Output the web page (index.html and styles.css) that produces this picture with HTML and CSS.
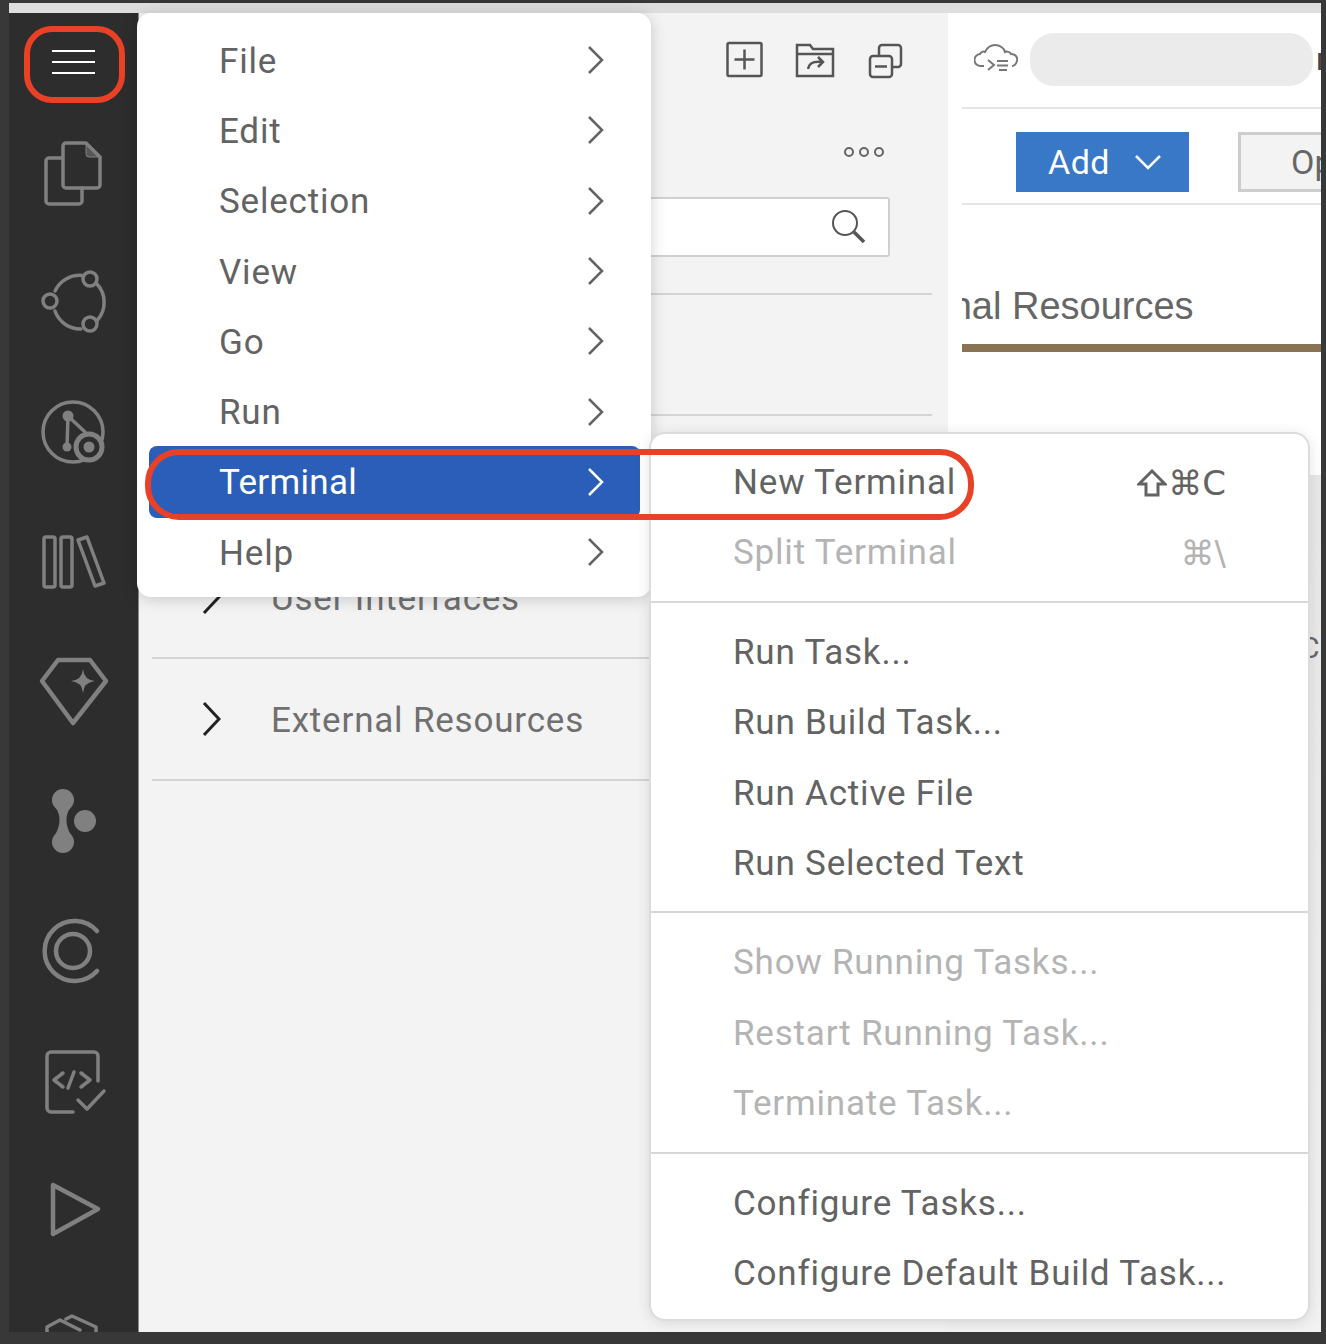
FILE: index.html
```html
<!DOCTYPE html>
<html lang="en">
<head>
    <meta charset="UTF-8">
    <title>Terminal menu</title>
    <link rel="stylesheet" href="styles.css">
</head>
<body>
    <div class="window">
        <div class="topbar"></div>
        <div class="main">
            <nav class="activity">
                <div class="hamburger"><span></span><span></span><span></span></div>
                <svg class="act-icon" viewBox="0 0 72 72">
                    <path d="M25 21H12a3 3 0 0 0-3 3v40a3 3 0 0 0 3 3h30a3 3 0 0 0 3-3V51"/>
                    <path d="M29 6h20l14 14v28a3 3 0 0 1-3 3H29a3 3 0 0 1-3-3V9a3 3 0 0 1 3-3z"/>
                    <path class="fill" d="M49 6v11a3 3 0 0 0 3 3h11z"/>
                </svg>
                <svg class="act-icon" viewBox="0 0 72 72">
                    <circle cx="53" cy="13" r="7"/>
                    <circle cx="13" cy="35" r="7"/>
                    <circle cx="53" cy="58" r="7"/>
                    <path d="M18 25A27 27 0 0 1 45 9.500"/>
                    <path d="M60 18A27 27 0 0 1 60.500 54"/>
                    <path d="M44 63A27 27 0 0 1 18 45"/>
                </svg>
                <svg class="act-icon" viewBox="0 0 72 72">
                    <circle cx="36" cy="36" r="30"/>
                    <circle class="solid" cx="31" cy="20" r="5.500"/>
                    <circle class="solid" cx="30" cy="51" r="4.500"/>
                    <path d="M31 20L30 51M31 20L48 36"/>
                    <circle class="ring" cx="52" cy="51" r="13"/>
                    <circle class="solid" cx="52" cy="51" r="5.500"/>
                </svg>
                <svg class="act-icon" viewBox="0 0 72 72">
                    <rect x="7" y="11" width="11" height="50" rx="2"/>
                    <rect x="24" y="11" width="11" height="50" rx="2"/>
                    <path d="M41 14l9-3 17 46-9 3z"/>
                </svg>
                <svg class="act-icon" viewBox="0 0 72 72">
                    <path class="thick" d="M21 5h32l16 21-33 42L5 26z"/>
                    <path class="fill-only" d="M46 14Q47 25 58 26 47 27 46 38 45 27 34 26 45 25 46 14z"/>
                </svg>
                <svg class="act-icon" viewBox="0 0 72 72">
                    <circle class="solid" cx="26" cy="15" r="11"/>
                    <circle class="solid" cx="26" cy="57" r="11"/>
                    <circle class="solid" cx="48" cy="36" r="11"/>
                    <path class="fill-only" d="M18 22C25 30 23 42 18 50H34C29 42 27 30 34 22z"/>
                </svg>
                <svg class="act-icon" viewBox="0 0 72 72">
                    <path class="thick" d="M60 16A30 30 0 1 0 60 56"/>
                    <circle class="thick" cx="36" cy="36" r="17"/>
                </svg>
                <svg class="act-icon" viewBox="0 0 72 72">
                    <path d="M61 36V11a4 4 0 0 0-4-4H14a4 4 0 0 0-4 4v52a4 4 0 0 0 4 4h22"/>
                    <path d="M26 28l-9 7 9 7M44 28l9 7-9 7M37 27l-6 16M41 55l9 9 17-18"/>
                </svg>
                <svg class="act-icon" viewBox="0 0 72 72">
                    <path class="thick" d="M16 11l45 24-45 25z"/>
                </svg>
                <svg class="act-icon" viewBox="0 0 72 72">
                    <path d="M10 33V23l13-7 20 10M29 15l6-3 24 11v10"/>
                </svg>
            </nav>

            <aside class="sidebar">
                <div class="side-tools">
                    <svg class="tool-icon" viewBox="0 0 40 40">
                        <rect x="2.500" y="3" width="34" height="33" rx="1.500"/>
                        <path d="M19.500 9.500v20M9.500 19.500h20"/>
                    </svg>
                    <svg class="tool-icon" viewBox="0 0 40 40">
                        <path d="M2 36V5h13l3 4h20v27zM2 14h36"/>
                        <path d="M13 29c1-6 5-8 14-7M23 17l5 5-5 5"/>
                    </svg>
                    <svg class="tool-icon" viewBox="0 0 40 40">
                        <rect x="5" y="16" width="22" height="21" rx="3"/>
                        <path d="M14 16v-8a3 3 0 0 1 3-3h16a3 3 0 0 1 3 3v16a3 3 0 0 1-3 3h-6M10 26.500h12"/>
                    </svg>
                </div>
                <div class="side-more">
                    <span class="dot"></span><span class="dot"></span><span class="dot"></span>
                </div>
                <div class="search-box">
                    <svg class="search-icon" viewBox="0 0 36 36">
                        <circle cx="15" cy="15" r="12"/>
                        <path class="handle" d="M24 24l10 10"/>
                    </svg>
                </div>
                <div class="side-row first"></div>
                <div class="side-row"></div>
                <div class="side-row">
                    <svg class="chevron" viewBox="0 0 20 36"><path d="M3 2l15 16L3 34"/></svg>
                    <span>User Interfaces</span>
                </div>
                <div class="side-row">
                    <svg class="chevron" viewBox="0 0 20 36"><path d="M3 2l15 16L3 34"/></svg>
                    <span>External Resources</span>
                </div>
            </aside>

            <section class="editor">
                <div class="ed-head">
                    <svg class="cloud" viewBox="0 0 44 30">
                        <path d="M10 22H7a6 6 0 0 1-1-12c1-2 3-3 5-2 2-4 5-7 10-7 5 0 9 3 10 7 2-1 5 0 6 2 5 0 7 4 6 7-1 3-3 5-5 5"/>
                        <path d="M14 16l6 5-6 5M23 17h11M23 21.500h11M25 26h8"/>
                    </svg>
                    <div class="pill"></div>
                    <span class="head-name">n</span>
                </div>
                <div class="ed-actions">
                    <button class="btn-add">Add
                        <svg viewBox="0 0 28 16"><path d="M2 2l12 12L26 2"/></svg>
                    </button>
                    <button class="btn-open">Open</button>
                </div>
                <div class="ed-title"><span>External Resources</span></div>
                <div class="ed-rule"></div>
                <div class="ed-card"><span>C</span></div>
            </section>
        </div>
    </div>

    <div class="menu main-menu">
        <div class="menu-item">File<svg class="arrow" viewBox="0 0 20 32"><path d="M3 3l13 13L3 29"/></svg></div>
        <div class="menu-item">Edit<svg class="arrow" viewBox="0 0 20 32"><path d="M3 3l13 13L3 29"/></svg></div>
        <div class="menu-item">Selection<svg class="arrow" viewBox="0 0 20 32"><path d="M3 3l13 13L3 29"/></svg></div>
        <div class="menu-item">View<svg class="arrow" viewBox="0 0 20 32"><path d="M3 3l13 13L3 29"/></svg></div>
        <div class="menu-item">Go<svg class="arrow" viewBox="0 0 20 32"><path d="M3 3l13 13L3 29"/></svg></div>
        <div class="menu-item">Run<svg class="arrow" viewBox="0 0 20 32"><path d="M3 3l13 13L3 29"/></svg></div>
        <div class="menu-item active">Terminal<svg class="arrow" viewBox="0 0 20 32"><path d="M3 3l13 13L3 29"/></svg></div>
        <div class="menu-item">Help<svg class="arrow" viewBox="0 0 20 32"><path d="M3 3l13 13L3 29"/></svg></div>
    </div>

    <div class="menu sub-menu">
        <div class="menu-item">New Terminal
            <span class="keys">
                <svg class="shift" viewBox="0 0 30 28"><path d="M15 2L2 15h7v11h12V15h7z"/></svg>⌘C
            </span>
        </div>
        <div class="menu-item off">Split Terminal<span class="keys">⌘\</span></div>
        <div class="sep"></div>
        <div class="menu-item">Run Task...</div>
        <div class="menu-item">Run Build Task...</div>
        <div class="menu-item">Run Active File</div>
        <div class="menu-item">Run Selected Text</div>
        <div class="sep"></div>
        <div class="menu-item off">Show Running Tasks...</div>
        <div class="menu-item off">Restart Running Task...</div>
        <div class="menu-item off">Terminate Task...</div>
        <div class="sep"></div>
        <div class="menu-item">Configure Tasks...</div>
        <div class="menu-item">Configure Default Build Task...</div>
    </div>

    <div class="mark mark-burger"></div>
    <div class="mark mark-terminal"></div>
</body>
</html>
```

FILE: styles.css
```css
body {
    margin: 0;
    width: 1326px;
    height: 1344px;
    overflow: hidden;
    position: relative;
    background-color: #383838;
    font-family: Roboto, "Liberation Sans", sans-serif;
    color: #666;
}

.window {
    margin: 3px 5px 0 9px;
    height: 1329px;
    display: flex;
    flex-direction: column;
    position: relative;
}

.topbar {
    height: 10px;
    background-color: #dedede;
}

.main {
    flex: 1;
    display: flex;
    min-height: 0;
}

/* activity bar */
.activity {
    width: 128px;
    padding-right: 1px;
    flex: none;
    background-color: #2d2d2d;
    border-right: 1px solid #8a8a8a;
    overflow: hidden;
    display: flex;
    flex-direction: column;
    align-items: center;
    gap: 57.7px;
}

.hamburger {
    width: 43px;
    height: 24px;
    margin: 37px 0 5px 0;
    display: flex;
    flex-direction: column;
    justify-content: space-between;
    flex: none;
}

.hamburger span {
    height: 2px;
    background-color: #fff;
}

.act-icon {
    width: 72px;
    height: 72px;
    flex: none;
    fill: none;
    stroke: #808080;
    stroke-width: 3.5;
    stroke-linecap: round;
    stroke-linejoin: round;
}

.act-icon .fill {
    fill: #808080;
    stroke-width: 1;
    fill-opacity: 0.5;
}

.act-icon .solid {
    fill: #808080;
    stroke: none;
}

.act-icon .fill-only {
    fill: #808080;
    stroke: none;
}

.act-icon .ring {
    fill: #2d2d2d;
    stroke-width: 5;
}

.act-icon .thick {
    stroke-width: 4.5;
}

/* sidebar */
.sidebar {
    width: 809px;
    flex: none;
    box-sizing: border-box;
    background-color: #f3f3f3;
    padding: 0 16px 0 13px;
}

.side-tools {
    display: flex;
    justify-content: flex-end;
    gap: 30px;
    padding: 27px 27px 0 0;
}

.tool-icon {
    width: 40px;
    height: 40px;
    fill: none;
    stroke: #555;
    stroke-width: 2.5;
}

.side-more {
    display: flex;
    justify-content: flex-end;
    gap: 5px;
    margin-top: 67px;
    padding-right: 48px;
}

.dot {
    width: 10px;
    height: 10px;
    box-sizing: border-box;
    border: 2px solid #666;
    border-radius: 50%;
}

.search-box {
    margin: 40px 42px 0 10px;
    height: 60px;
    box-sizing: border-box;
    background-color: #fff;
    border: 2px solid #d0d0d0;
    border-radius: 3px;
    display: flex;
    justify-content: flex-end;
    align-items: center;
    padding-right: 22px;
}

.search-icon {
    width: 36px;
    height: 36px;
    margin-top: -2px;
    fill: none;
    stroke: #555;
    stroke-width: 2;
}

.search-icon .handle {
    stroke-width: 3.5;
}

.side-row {
    height: 121.6px;
    box-sizing: border-box;
    display: flex;
    align-items: center;
    padding-top: 3px;
    font-size: 35px;
    letter-spacing: 0.8px;
    color: #707070;
    border-bottom: 2px solid #d4d4d4;
}

.side-row.first {
    margin-top: 36px;
    border-top: 2px solid #d4d4d4;
    height: 123px;
}

.chevron {
    width: 20px;
    height: 36px;
    margin: -3px 50px 0 49px;
    flex: none;
    fill: none;
    stroke: #222;
    stroke-width: 3;
}

/* editor */
.editor {
    flex: 1;
    min-width: 0;
    background-color: #fff;
    padding-left: 14px;
    overflow: hidden;
}

.ed-head {
    height: 96px;
    box-sizing: border-box;
    display: flex;
    align-items: center;
    white-space: nowrap;
    padding-left: 12px;
    padding-bottom: 2px;
    border-bottom: 2px solid #e4e4ec;
}

.cloud {
    width: 44px;
    height: 30px;
    flex: none;
    margin-right: 12px;
    fill: none;
    stroke: #777;
    stroke-width: 2;
}

.pill {
    width: 283px;
    height: 53px;
    flex: none;
    border-radius: 24px;
    background-color: #ebebeb;
}

.head-name {
    font-size: 32px;
    color: #444;
    margin-left: 3px;
}

.ed-actions {
    height: 96px;
    box-sizing: border-box;
    display: flex;
    align-items: center;
    gap: 49px;
    padding: 12px 0 0 54px;
    white-space: nowrap;
    border-bottom: 2px solid #e4e4ec;
}

.btn-add {
    width: 173px;
    height: 60px;
    flex: none;
    border: none;
    padding: 0 0 0 5px;
    background-color: #3878c7;
    color: #fff;
    font-family: inherit;
    font-size: 34px;
    letter-spacing: 0.5px;
    display: flex;
    align-items: center;
    justify-content: center;
    gap: 24px;
}

.btn-add svg {
    width: 28px;
    height: 16px;
    fill: none;
    stroke: #fff;
    stroke-width: 2.5;
}

.btn-open {
    width: 160px;
    height: 60px;
    flex: none;
    box-sizing: border-box;
    border: 3px solid #cdcdcd;
    background-color: #f3f3f3;
    color: #666;
    font-family: inherit;
    font-size: 34px;
    text-align: left;
    padding-left: 50px;
}

.ed-title {
    height: 139px;
    box-sizing: border-box;
    padding-top: 80px;
    overflow: hidden;
    white-space: nowrap;
    font-family: "Liberation Sans", sans-serif;
    font-size: 38px;
    color: #666;
}

.ed-title span {
    margin-left: -100px;
}

.ed-rule {
    height: 8px;
    background-color: #8a7352;
}

.ed-card {
    margin: 123px 0 0 -14px;
    height: 900px;
    background: linear-gradient(#e8e8e8, #f4f4f4);
    padding: 155px 0 0 352px;
    font-size: 30px;
}

/* menus */
.menu {
    position: absolute;
    box-sizing: border-box;
    background-color: #fff;
    font-size: 35px;
    letter-spacing: 0.8px;
    color: #636363;
}

.main-menu {
    left: 137px;
    top: 13px;
    width: 514px;
    height: 584px;
    border-radius: 14px;
    padding: 13px 11px 0 12px;
    box-shadow: 0 2px 16px rgba(0, 0, 0, 0.18);
}

.sub-menu {
    left: 651px;
    top: 434px;
    width: 657px;
    height: 885px;
    border-radius: 14px;
    padding: 13.4px 0;
    box-shadow: 0 0 0 2px #dcdcdc, 0 2px 16px rgba(0, 0, 0, 0.14);
}

.menu-item {
    height: 70.3px;
    box-sizing: border-box;
    display: flex;
    align-items: center;
    justify-content: space-between;
    padding-left: 70px;
    padding-right: 34px;
    border-radius: 8px;
    white-space: nowrap;
}

.sub-menu .menu-item {
    padding-left: 82px;
    padding-right: 82px;
}

.menu-item.active {
    margin-top: -2px;
    height: 72.3px;
    padding-top: 2px;
    background-color: #2a5eb8;
    color: #fff;
    letter-spacing: 0.3px;
}

.menu-item.off {
    color: #b4b4b4;
}

.keys {
    display: flex;
    align-items: center;
    font-family: "DejaVu Sans", sans-serif;
    font-size: 34px;
    letter-spacing: 0;
}

.shift {
    width: 30px;
    height: 28px;
    margin-right: 1px;
    fill: none;
    stroke: #636363;
    stroke-width: 3;
}

.arrow {
    width: 20px;
    height: 32px;
    margin-top: -2px;
    fill: none;
    stroke: #636363;
    stroke-width: 2.5;
}

.active .arrow {
    stroke: #fff;
}

.sep {
    height: 2px;
    margin: 13px 0 14.3px;
    background-color: #d8d8d8;
}

/* red annotations */
.mark {
    position: absolute;
    box-sizing: border-box;
    border: 6px solid #e94126;
}

.mark-burger {
    left: 24px;
    top: 26px;
    width: 101px;
    height: 77px;
    border-radius: 28px;
}

.mark-terminal {
    left: 145px;
    top: 449px;
    width: 829px;
    height: 71px;
    border-radius: 34px;
}
```
